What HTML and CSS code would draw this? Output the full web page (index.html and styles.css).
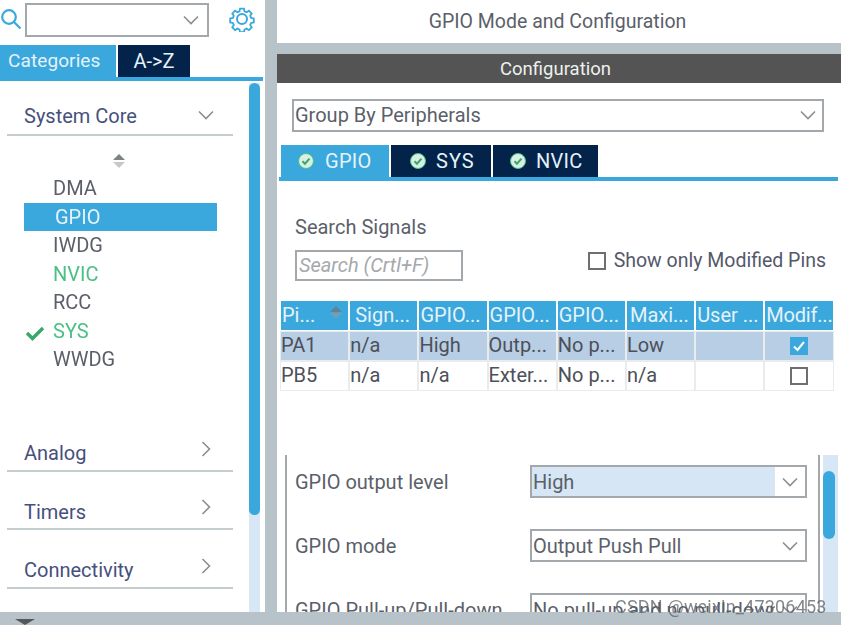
FILE: index.html
```html
<!DOCTYPE html>
<html lang="en">
<head>
<meta charset="utf-8">
<title>GPIO Mode and Configuration</title>
<link rel="stylesheet" href="styles.css">
</head>
<body>
<div class="app">
  <aside class="side">
    <div class="search-row">
      <svg class="search-ico" viewBox="0 0 22 22"><circle cx="9" cy="9" r="6.8"/><path d="M14 14l6.5 6.5"/></svg>
      <div class="combo"><svg class="chev chev-combo" viewBox="0 0 16 10"><path d="M1 1.5l7 7 7-7"/></svg></div>
      <svg class="gear" viewBox="0 0 26 26"><path d="M10.8 1.5h4.4l.6 3 2.3 1 2.6-1.7 3.1 3.1-1.7 2.6 1 2.3 3 .6v4.4l-3 .6-1 2.300 1.700 2.600-3.100 3.100-2.600-1.700-2.300 1-.6 3h-4.400l-.6-3-2.300-1-2.600 1.700-3.100-3.100 1.700-2.600-1-2.300-3-.6v-4.400l3-.6 1-2.300-1.700-2.600 3.100-3.100 2.600 1.700 2.300-1z" transform="translate(1.300 1.300) scale(.9)"/><circle cx="13" cy="13" r="5"/></svg>
    </div>
    <div class="side-tabs">
      <div class="side-tab side-tab-on">Categories</div>
      <div class="side-tab side-tab-off">A-&gt;Z</div>
    </div>
    <div class="side-body">
      <div class="tree">
        <div class="group group-first"><span>System Core</span><svg class="chev chev-group" viewBox="0 0 16 10"><path d="M1 1.500l7 7 7-7"/></svg></div>
        <div class="sorter"><i class="tri-up"></i><i class="tri-down"></i></div>
        <ul class="items">
          <li class="item">DMA</li>
          <li class="item item-sel">GPIO</li>
          <li class="item">IWDG</li>
          <li class="item item-ok">NVIC</li>
          <li class="item">RCC</li>
          <li class="item item-ok"><svg class="tick" viewBox="0 0 20 16"><path d="M2 8l5.500 5.500L18 3"/></svg>SYS</li>
          <li class="item">WWDG</li>
        </ul>
        <div class="group group-analog"><span>Analog</span><svg class="chev chev-right" viewBox="0 0 10 16"><path d="M1.500 1l7 7-7 7"/></svg></div>
        <div class="group group-next"><span>Timers</span><svg class="chev chev-right" viewBox="0 0 10 16"><path d="M1.500 1l7 7-7 7"/></svg></div>
        <div class="group group-next"><span>Connectivity</span><svg class="chev chev-right" viewBox="0 0 10 16"><path d="M1.500 1l7 7-7 7"/></svg></div>
      </div>
      <div class="side-scroll"><div class="side-thumb"></div></div>
    </div>
  </aside>
  <main class="main">
    <header class="title">GPIO Mode and Configuration</header>
    <section class="config">
      <div class="config-bar">Configuration</div>
      <div class="group-select"><span>Group By Peripherals</span><svg class="chev chev-select" viewBox="0 0 16 10"><path d="M1 1.500l7 7 7-7"/></svg></div>
      <div class="cfg-tabs">
        <div class="cfg-tab cfg-tab-on"><svg class="ok" viewBox="0 0 16 16"><circle cx="8" cy="8" r="7.500"/><path d="M4.500 8.200l2.500 2.500 4.500-5"/></svg>GPIO</div>
        <div class="cfg-tab cfg-tab-sys"><svg class="ok" viewBox="0 0 16 16"><circle cx="8" cy="8" r="7.500"/><path d="M4.500 8.200l2.500 2.500 4.500-5"/></svg>SYS</div>
        <div class="cfg-tab cfg-tab-nvic"><svg class="ok" viewBox="0 0 16 16"><circle cx="8" cy="8" r="7.500"/><path d="M4.500 8.200l2.500 2.500 4.500-5"/></svg>NVIC</div>
      </div>
      <div class="search-signals">
        <div class="search-col">
          <div class="search-label">Search Signals</div>
          <div class="search-input">Search (Crtl+F)</div>
        </div>
        <label class="only-mod"><span class="cb"></span>Show only Modified Pins</label>
      </div>
      <div class="pins">
        <div class="th th-pin">Pi...<span class="th-sort"><i class="tri-up"></i><i class="tri-down"></i></span></div>
        <div class="th th-sign">Sign...</div>
        <div class="th">GPIO...</div>
        <div class="th">GPIO...</div>
        <div class="th">GPIO...</div>
        <div class="th th-max">Maxi...</div>
        <div class="th">User ...</div>
        <div class="th th-modif">Modif...</div>
        <div class="td td-sel">PA1</div>
        <div class="td td-sel">n/a</div>
        <div class="td td-sel">High</div>
        <div class="td td-sel">Outp...</div>
        <div class="td td-sel">No p...</div>
        <div class="td td-sel">Low</div>
        <div class="td td-sel"></div>
        <div class="td td-sel td-check"><span class="cb cb-on"><svg viewBox="0 0 18 18"><path d="M4 9.500l3.500 3.500 6.500-8"/></svg></span></div>
        <div class="td">PB5</div>
        <div class="td">n/a</div>
        <div class="td">n/a</div>
        <div class="td">Exter...</div>
        <div class="td">No p...</div>
        <div class="td">n/a</div>
        <div class="td"></div>
        <div class="td td-check"><span class="cb"></span></div>
      </div>
      <div class="detail">
        <div class="form">
          <div class="field"><span class="field-label">GPIO output level</span><div class="field-select field-hi"><span class="field-val">High</span><span class="field-arrow"><svg class="chev chev-select" viewBox="0 0 16 10"><path d="M1 1.500l7 7 7-7"/></svg></span></div></div>
          <div class="field"><span class="field-label">GPIO mode</span><div class="field-select"><span class="field-val">Output Push Pull</span><span class="field-arrow"><svg class="chev chev-select" viewBox="0 0 16 10"><path d="M1 1.500l7 7 7-7"/></svg></span></div></div>
          <div class="field"><span class="field-label">GPIO Pull-up/Pull-down</span><div class="field-select"><span class="field-val">No pull-up and no pull-down</span><span class="field-arrow"><svg class="chev chev-select" viewBox="0 0 16 10"><path d="M1 1.500l7 7 7-7"/></svg></span></div></div>
        </div>
        <div class="detail-scroll"><div class="detail-thumb"></div></div>
      </div>
    </section>
  </main>
</div>
<div class="foot"><i class="foot-tri"></i></div>
<div class="watermark">CSDN @weixin_47306453</div>
</body>
</html>
```
FILE: styles.css
```css
* { box-sizing: border-box; }
html, body { margin: 0; height: 100%; }
body {
  position: relative;
  width: 841px;
  height: 625px;
  overflow: hidden;
  background: #b7c2c9;
  font-family: Roboto, "Liberation Sans", sans-serif;
  font-size: 20px;
  color: #5b5f6a;
}
.app { display: flex; height: 612px; filter: blur(.35px); }
.side {
  width: 265px;
  background: #fff;
  display: flex;
  flex-direction: column;
  flex: none;
}
.search-row { display: flex; align-items: flex-start; height: 45px; padding-top: 3px; }
.search-ico { width: 22px; height: 22px; margin-top: 5px; flex: none; fill: none; stroke: #3aa8dc; stroke-width: 2.2; }
.combo {
  width: 184px; height: 34px; margin-left: 3px;
  border: 2px solid #a2a8ac;
  display: flex; align-items: center; justify-content: flex-end;
  padding-right: 8px;
}
.gear { width: 26px; height: 26px; margin: 3px 0 0 20px; fill: none; stroke: #3aa8dc; stroke-width: 2; }
.chev { fill: none; stroke: #8a8e92; stroke-width: 1.600; display: block; }
.chev-combo { width: 16px; height: 10px; }
.side-tabs {
  display: flex; gap: 2px; height: 36px;
  border-bottom: 4px solid #3aa8dc;
  width: 263px;
}
.side-tab { height: 32px; line-height: 32px; color: #e6f2fa; }
.side-tab-on { width: 116px; background: #3aa8dc; padding-left: 8px; font-size: 19px; letter-spacing: .1px; }
.side-tab-off { width: 72px; background: #03234b; text-align: center; }
.side-body { flex: 1; display: flex; min-height: 0; }
.tree { width: 249px; padding: 0 16px 0 7px; flex: none; }
.group {
  display: flex; justify-content: space-between; align-items: center;
  border-bottom: 2px solid #c6cdd1;
  color: #46507c;
  padding: 0 22px 0 17px;
}
.group span { padding-top: 3px; }
.group-first { margin-top: 21px; height: 34px; padding-right: 19px; }
.group-first span { padding: 0 0 5px; }
.chev-group { width: 16px; height: 10px; margin-bottom: 7px; }
.chev-right { width: 10px; height: 16px; margin-bottom: 6px; }
.sorter { display: flex; flex-direction: column; align-items: center; gap: 2px; margin: 18px 0 6px; width: 224px; }
.tri-up, .tri-down { display: block; width: 0; height: 0; border-left: 6px solid transparent; border-right: 6px solid transparent; }
.tri-up { border-bottom: 6px solid #7d8285; }
.tri-down { border-top: 6px solid #c4c8cb; }
.items { list-style: none; margin: 0; padding: 0; }
.item { position: relative; height: 28.500px; line-height: 28.500px; padding-left: 46px; width: 210px; }
.item-sel { margin-left: 17px; width: 193px; padding-left: 31px; background: #3aa8dc; color: #e6f2fa; }
.item-ok { color: #4cbf85; }
.tick { position: absolute; left: 18px; top: 8px; width: 20px; height: 16px; fill: none; stroke: #3ca76c; stroke-width: 3.500; }
.group-analog { margin-top: 60px; height: 38px; }
.group-next { margin-top: 20.500px; height: 38px; }
.side-scroll { width: 11px; background: #d7e7f5; margin: 2px 0 0; }
.side-thumb { height: 432px; background: #3aa8dc; border-radius: 6px; }
.main { flex: 1; margin-left: 12px; display: flex; flex-direction: column; gap: 11px; min-width: 0; }
.title { height: 43px; background: #fff; text-align: center; line-height: 43px; font-size: 19.500px; padding-right: 3px; }
.config { flex: 1; background: #fff; display: flex; flex-direction: column; min-height: 0; overflow: hidden; }
.config-bar { height: 29px; flex: none; background: #535453; color: #eef0f0; text-align: center; line-height: 30px; font-size: 18.500px; padding-right: 7px; }
.group-select {
  flex: none; height: 33px; margin: 16px 17px 0 15px;
  border: 2px solid #a2a8ac;
  display: flex; align-items: center; justify-content: space-between;
  padding: 0 6px 1px 1px;
}
.chev-select { width: 16px; height: 10px; }
.cfg-tabs {
  flex: none; display: flex; gap: 2px; height: 36px; margin: 13px 3px 0 2px;
  padding-left: 2px;
  border-bottom: 4px solid #3aa8dc;
}
.cfg-tab { height: 32px; display: flex; align-items: center; color: #e6f2fa; background: #03234b; gap: 10px; }
.cfg-tab-on { width: 108px; background: #3aa8dc; padding-left: 17px; letter-spacing: .3px; }
.cfg-tab-on .ok { margin-right: 1px; }
.cfg-tab-sys { width: 100px; padding-left: 19px; letter-spacing: 1px; }
.cfg-tab-nvic { width: 105px; padding-left: 17px; letter-spacing: .3px; }
.ok { width: 16px; height: 16px; flex: none; }
.ok circle { fill: #d8f0e4; stroke: #4cbf85; stroke-width: 1; }
.ok path { fill: none; stroke: #3ca76c; stroke-width: 2; }
.search-signals { flex: none; display: flex; justify-content: space-between; align-items: flex-end; padding: 34px 15px 0 18px; height: 120px; }
.search-col { display: flex; flex-direction: column; gap: 12px; padding-bottom: 20px; }
.search-label { line-height: 21px; }
.search-input { width: 168px; height: 31px; border: 2px solid #a2a8ac; color: #a5a8ac; font-style: italic; line-height: 27px; padding-left: 2px; }
.only-mod { display: flex; align-items: center; gap: 8px; color: #55586a; padding-bottom: 29px; white-space: nowrap; font-size: 19.500px; }
.cb { display: block; width: 18px; height: 18px; border: 2px solid #6d7072; flex: none; }
.cb-on { background: #3aa8dc; border: 0; }
.cb-on svg { display: block; width: 18px; height: 18px; fill: none; stroke: #fff; stroke-width: 2; }
.pins {
  flex: none;
  display: grid;
  grid-template-columns: repeat(8, 67.200px);
  gap: 2px;
  margin-left: 4px;
  background: #fff;
}
.th { height: 29px; background: #3aa8dc; color: #e6f2fa; line-height: 28px; padding-left: 1px; white-space: nowrap; overflow: hidden; position: relative; }
.th-sign { padding-left: 5px; }
.th-max { padding-left: 3px; }
.th-modif { letter-spacing: -.2px; }
.th-sort { position: absolute; right: 6px; top: 5px; display: flex; flex-direction: column; gap: 1px; }
.th-sort .tri-up { border-bottom-color: #6b7f8c; }
.th-sort .tri-down { border-top-color: #6f9fbd; }
.td { height: 28px; background: #fff; line-height: 26px; padding-left: 0; color: #4d505a; box-shadow: 0 0 0 1px #e8ecef; white-space: nowrap; }
.td-sel { background: #b7cee4; }
.td-check { display: flex; align-items: center; justify-content: center; }
.detail { flex: 1; min-height: 0; margin: 65px 3px 0 8px; display: flex; overflow: hidden; }
.form { width: 535px; flex: none; border-left: 2px solid #a2a8ac; border-right: 2px solid #a2a8ac; padding: 10px 0 0 8px; display: flex; flex-direction: column; gap: 31px; margin-right: 3px; }
.field { display: flex; align-items: center; height: 33px; flex: none; justify-content: space-between; padding-right: 11px; }
.field-select { width: 277px; height: 33px; border: 2px solid #a2a8ac; display: flex; }
.field-val { flex: 1; padding-left: 1px; line-height: 30px; white-space: nowrap; overflow: hidden; }
.field-arrow { width: 30px; display: flex; align-items: center; justify-content: center; flex: none; }
.field-hi .field-val { background: #d6e6f4; }
.detail-scroll { flex: 1; background: #d7e7f5; padding-top: 16px; }
.detail-thumb { height: 68px; width: 12px; background: #3aa8dc; border-radius: 6px; }
.foot { height: 13px; position: relative; }
.foot-tri { position: absolute; left: 15px; top: 7px; width: 0; height: 0; border-left: 10px solid transparent; border-right: 10px solid transparent; border-top: 6px solid #55585a; }
.watermark { position: absolute; left: 615px; top: 596px; color: rgba(90, 95, 100, .75); font-size: 18px; letter-spacing: .2px; white-space: nowrap; }
```
